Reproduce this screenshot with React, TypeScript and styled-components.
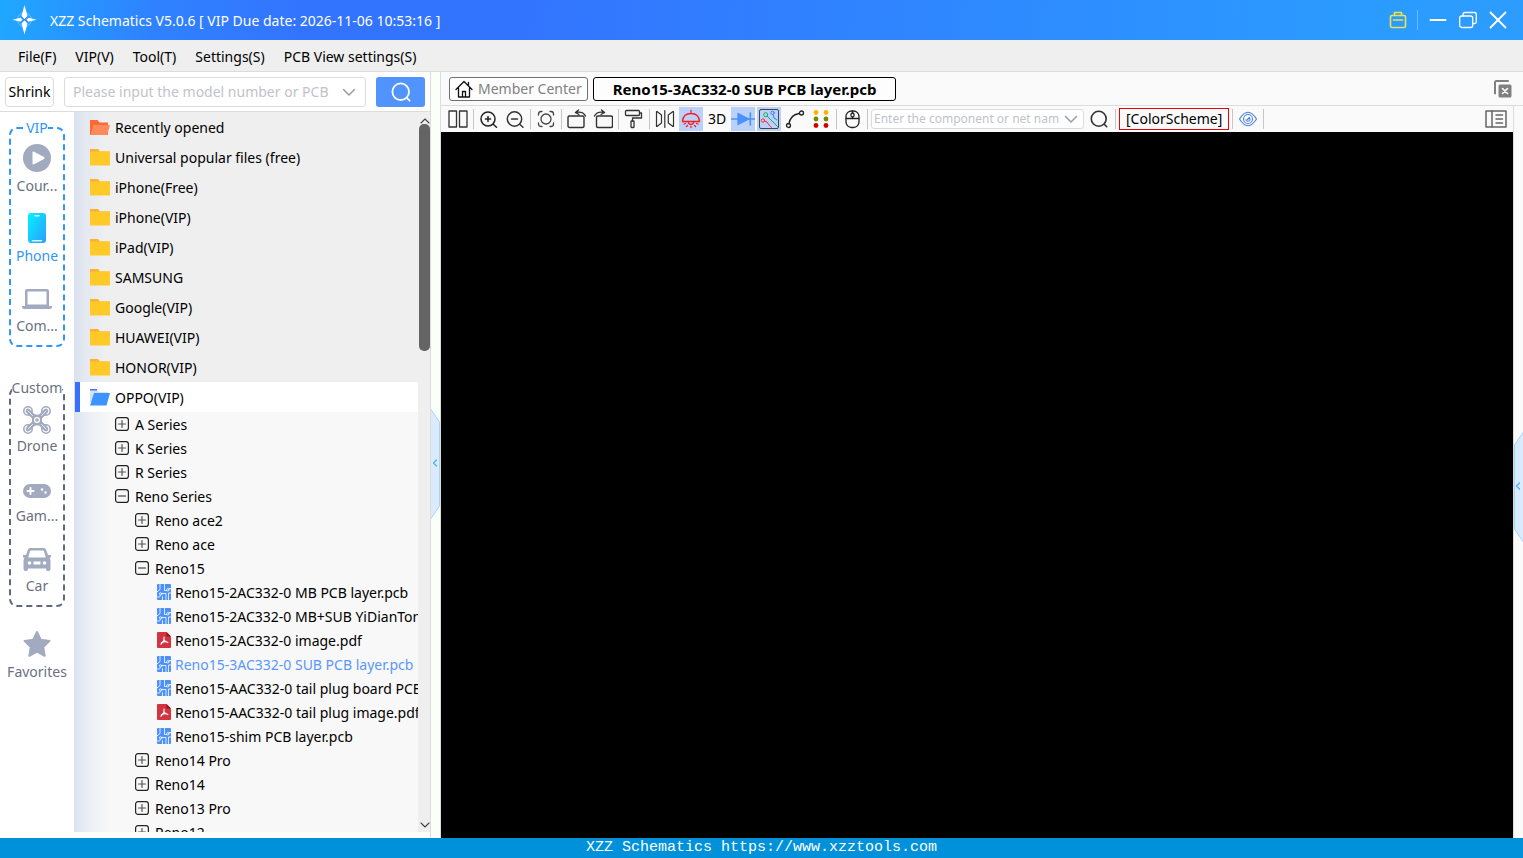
import React from 'react';
import styled, { createGlobalStyle, css } from 'styled-components';

const GlobalStyle = createGlobalStyle`
  *, *::before, *::after { box-sizing: border-box; }
  body { margin: 0; }
  body, button, input {
    font-family: "Noto Sans", "Open Sans", "Noto Sans CJK SC", sans-serif;
    font-size: 14px;
    line-height: 20px;
    color: #000;
  }
  button { border: 0; padding: 0; background: none; cursor: pointer; }
  ul { list-style: none; margin: 0; padding: 0; }
  svg { display: block; flex: none; }
`;

const Shell = styled.div`
  display: flex;
  flex-direction: column;
  height: 100vh;
  overflow: hidden;
  background: #fafafa;
`;

/* ---------- title bar and menu ---------- */

const TitleBar = styled.header`
  display: flex;
  align-items: center;
  flex: none;
  height: 40px;
  padding: 0 10px 0 12px;
  background: linear-gradient(95deg, #1fa8ff 0%, #2f82ff 10%, #3374ff 20%, #3374ff 34%, #2f86ff 60%, #2b9cff 90%, #2c9dff 100%);
`;

const AppTitle = styled.h1`
  margin: 0 auto 0 13px;
  padding-top: 2px;
  font-size: 14px;
  font-weight: 400;
  line-height: 20px;
  color: #fff;
  white-space: nowrap;
`;

const WindowButton = styled.button`
  display: grid;
  place-items: center;
  width: 30px;
  height: 30px;
`;

const TitleDivider = styled.span`
  width: 1px;
  height: 20px;
  margin: 0 5px 0 4px;
  background: #6fbaff;
`;

const MenuBar = styled.nav`
  display: flex;
  align-items: center;
  flex: none;
  gap: 19px;
  height: 32px;
  padding: 2px 18px 0;
  background: #efefef;
  border-bottom: 1px solid #dcdcdc;
`;

const MenuItem = styled.button`
  font-size: 14px;
  white-space: nowrap;
`;

const Body = styled.div`
  display: flex;
  flex: 1;
  min-height: 0;
`;

/* ---------- left panel ---------- */

const SidePanel = styled.aside`
  display: flex;
  flex-direction: column;
  flex: none;
  width: 431px;
  padding-bottom: 6px;
  background: #fff;
  border-right: 1px solid #dcdcdc;
`;

const SearchRow = styled.form`
  display: flex;
  align-items: center;
  flex: none;
  gap: 10px;
  height: 40px;
  padding: 0 5px;
  border-bottom: 1px solid #dcdcdc;
`;

const ShrinkButton = styled.button`
  width: 49px;
  height: 30px;
  border: 1px solid #dcdcdc;
  border-radius: 4px;
  background: #fff;
`;

const ComboBox = styled.div<{ $compact?: boolean }>`
  display: flex;
  align-items: center;
  flex: ${(p) => (p.$compact ? '0 1 213px' : '1')};
  min-width: 0;
  height: ${(p) => (p.$compact ? 20 : 30)}px;
  padding: 0 ${(p) => (p.$compact ? '5px 0 2px' : '9px 0 8px')};
  border: 1px solid #dcdcdc;
  border-radius: 3px;
  background: #fff;

  input {
    flex: 1;
    min-width: 0;
    padding: 0;
    border: 0;
    outline: 0;
    background: none;
    font-size: ${(p) => (p.$compact ? 12 : 14)}px;
    line-height: 18px;
  }
  input::placeholder { color: #bfc3ca; opacity: 1; }
`;

const ComboArrow = styled.button`
  display: grid;
  place-items: center;
  width: 14px;
  height: 18px;
  margin-left: 5px;
`;

const SearchButton = styled.button`
  display: grid;
  place-items: center;
  width: 49px;
  height: 30px;
  border-radius: 3px;
  background: #5294ff;
`;

const PanelBody = styled.div`
  display: flex;
  flex: 1;
  min-height: 0;
`;

const CategoryNav = styled.nav`
  flex: none;
  width: 74px;
  padding: 6px 0 0;
  background: #fff;
`;

const CategoryButton = styled.button<{ $active?: boolean }>`
  display: flex;
  flex-direction: column;
  align-items: center;
  justify-content: space-between;
  width: 100%;
  height: 52px;
  color: ${(p) => (p.$active ? '#2f97f5' : '#6a7080')};
  white-space: nowrap;
`;

const CategoryGroup = styled.fieldset<{ $accent?: boolean }>`
  display: flex;
  flex-direction: column;
  gap: ${(p) => (p.$accent ? 18 : 20)}px;
  min-width: 0;
  margin: 0 9px ${(p) => (p.$accent ? 31 : 23)}px;
  padding: ${(p) => (p.$accent ? 6 : 8)}px 0 9px;
  border: 2px dashed ${(p) => (p.$accent ? '#2f97f5' : '#5f6880')};
  border-radius: 8px;
  color: ${(p) => (p.$accent ? '#2f97f5' : '#6a7080')};

  legend {
    margin: 0 auto;
    padding: 0;
    line-height: 20px;
  }
  ${CategoryButton} {
    height: ${(p) => (p.$accent ? 52 : 50)}px;
  }
`;

const IconSlot = styled.span`
  display: flex;
  align-items: center;
  height: 28px;
`;

const TreePane = styled.div`
  flex: 1;
  min-width: 0;
  overflow: hidden;
  padding-left: 1px;
  background: linear-gradient(90deg, #d8e1ef 0, #e4e8f0 10px, #efefef 32px);
`;

const FolderRow = styled.button<{ $selected?: boolean }>`
  display: flex;
  align-items: center;
  gap: 5px;
  width: 100%;
  height: 30px;
  padding-left: 10px;
  border-left: 5px solid transparent;
  white-space: nowrap;
  ${(p) => p.$selected && css`
    background: #fff;
    border-left-color: #3a70ff;
  `}
`;

const RowLabel = styled.span`
  padding-top: 2px;
`;

const SubTree = styled.ul`
  background: linear-gradient(90deg, #dbe4f3 0, #eaeef5 12px, #f8f8f8 36px);
`;

const TreeRow = styled.button<{ $level: number; $active?: boolean }>`
  display: flex;
  align-items: center;
  gap: ${(p) => (p.$level === 3 ? 4 : 6)}px;
  width: 100%;
  height: 24px;
  padding-left: ${(p) => (p.$level === 3 ? 82 : 20 + p.$level * 20)}px;
  overflow: hidden;
  color: ${(p) => (p.$active ? '#5b97fb' : '#000')};
  white-space: nowrap;
`;

const ScrollTrack = styled.div`
  display: flex;
  flex-direction: column;
  align-items: center;
  flex: none;
  width: 12px;
  padding: 6px 0 4px 1px;
  background: #efefef;
`;

const ScrollThumb = styled.div`
  width: 11px;
  height: 32%;
  margin: 0 0 auto;
  border-radius: 5px;
  background: #646464;
`;

const Gutter = styled.div<{ $offset: number }>`
  display: flex;
  flex-direction: column;
  justify-content: center;
  flex: none;
  width: 9px;
  padding-top: ${(p) => p.$offset}px;
`;

const LeftGutter = styled(Gutter)`
  background: #fafff8;
`;

/* ---------- main area ---------- */

const Main = styled.main`
  display: flex;
  flex-direction: column;
  flex: 1;
  min-width: 0;
  border-left: 1px solid #dcdcdc;
`;

const TabBar = styled.div`
  display: flex;
  align-items: center;
  flex: none;
  gap: 5px;
  height: 34px;
  padding: 0 11px 0 8px;
  border-bottom: 1px solid #dcdcdc;
`;

const Tab = styled.button<{ $active?: boolean }>`
  display: flex;
  align-items: center;
  justify-content: center;
  gap: 5px;
  height: 24px;
  padding: 0 ${(p) => (p.$active ? 19 : 5)}px;
  border: 1px solid ${(p) => (p.$active ? '#000' : '#707070')};
  border-radius: 3px;
  background: #fdfdfd;
  color: ${(p) => (p.$active ? '#000' : '#808080')};
  font-size: ${(p) => (p.$active ? 15 : 14)}px;
  font-weight: ${(p) => (p.$active ? 700 : 400)};
  white-space: nowrap;
`;

const CloseTabs = styled.button`
  margin-left: auto;
`;

const Workspace = styled.div`
  display: flex;
  flex: 1;
  min-height: 0;
`;

const Viewer = styled.section`
  display: flex;
  flex-direction: column;
  flex: 1;
  min-width: 0;
  border-right: 1px solid #dcdcdc;
`;

const Toolbar = styled.div`
  display: flex;
  align-items: center;
  flex: none;
  gap: 2px;
  height: 26px;
  padding: 0 5px;
`;

const ToolButton = styled.button<{ $on?: boolean }>`
  display: grid;
  place-items: center;
  flex: none;
  width: 24px;
  height: 24px;
  background: ${(p) => (p.$on ? '#b9d1fb' : 'transparent')};
`;

const FindButton = styled(ToolButton)`
  width: 26px;
`;

const Separator = styled.span`
  flex: none;
  width: 1px;
  height: 20px;
  margin: 0 1px;
  background: #c6c6c6;
`;

const SchemeButton = styled.button`
  flex: none;
  height: 22px;
  padding: 0 6px;
  border: 1px solid #f00000;
`;

const PanelToggle = styled(ToolButton)`
  margin-left: auto;
`;

const Canvas = styled.div`
  flex: 1;
  background: #000;
`;

const StatusBar = styled.footer`
  flex: none;
  height: 20px;
  background: #0091da;
  color: #fff;
  font-family: "Liberation Mono", "DejaVu Sans Mono", monospace;
  font-size: 15px;
  line-height: 20px;
  text-align: center;
  white-space: nowrap;

  a { color: inherit; text-decoration: none; }
`;

/* ---------- icons ---------- */

type IconProps = { w?: number; h?: number; box?: string; color?: string; sw?: number; children: React.ReactNode };

const Icon = ({ w = 20, h = 20, box, color = '#333', sw = 1.3, children }: IconProps) => (
  <svg width={w} height={h} viewBox={box ?? `0 0 ${w} ${h}`} fill="none" stroke={color} strokeWidth={sw}
    strokeLinecap="round" strokeLinejoin="round" aria-hidden="true">
    {children}
  </svg>
);

const Logo = () => (
  <Icon w={25} h={30} color="none">
    <circle cx="12.500" cy="14.700" r="7" stroke="#7fbcff" strokeWidth="1" />
    <path d="M12.500 0 L15.500 11 L13 14 H12 L9.500 11Z M12.500 29.500 L15.500 18.500 L13 15.500 H12 L9.500 18.500Z" fill="#fff" />
    <path d="M0.500 14.700 L8.500 12.700 L10.500 14.700 L8.500 16.700Z M24.500 14.700 L16.500 12.700 L14.500 14.700 L16.500 16.700Z" fill="#fff" />
    <path d="M9.800 12.200 L15.200 17.300 M15.200 12.200 L9.800 17.300" stroke="#3a86ff" strokeWidth="1" />
  </Icon>
);

const Chevron = () => (
  <Icon w={14} h={8} color="#9a9da3" sw={1.5}><path d="M1.500 1.500 L7 7 L12.500 1.500" /></Icon>
);

const Magnifier = ({ color, size }: { color: string; size: number }) => (
  <Icon w={size} h={size} box="0 0 20 20" color={color} sw={1.8}>
    <circle cx="9.700" cy="9.700" r="8.300" />
    <path d="M15.800 15.800 L18.600 18.600" />
  </Icon>
);

const Folder = () => (
  <Icon w={20} h={18} color="none">
    <path d="M0 1 H8 L10 3.500 H20 V8 H0Z" fill="#ffb02e" />
    <rect x="0" y="3.500" width="20" height="14" rx="0.500" fill="#ffc928" />
  </Icon>
);

const RecentFolder = () => (
  <Icon w={20} h={18} color="none">
    <path d="M0 2 H7.500 L9.500 4.500 H18 V17 H0Z" fill="#fb6a35" />
    <path d="M3.500 7 H20 L17.200 17 H0.500Z" fill="#ff8a5c" />
  </Icon>
);

const OpenFolder = () => (
  <Icon w={20} h={18} color="none">
    <path d="M0 1 H7 V3 H0Z" fill="#4a74f0" />
    <path d="M0 2.500 H7.500 L9 4 H18 V7 L2 14 H0Z" fill="#d5e0fa" />
    <path d="M4 5 H20 L16.500 17.500 H0Z" fill="#3d93ff" />
  </Icon>
);

const Expander = ({ open }: { open: boolean }) => (
  <Icon w={14} h={14} color="#222" sw={1.2}>
    <rect x="0.600" y="0.600" width="12.800" height="12.800" rx="2.500" />
    <path d="M3.500 7 H10.500" stroke={open ? '#222' : '#555'} />
    {!open && <path d="M7 3.500 V10.500" stroke="#555" />}
  </Icon>
);

const PcbFile = () => (
  <Icon w={14} h={16} color="#fff" sw={0.8}>
    <rect width="14" height="16" rx="1" fill="#4c90fb" stroke="none" />
    <path d="M7.500 0 V6.500 H9.500 M3 0 V5.500 L0 8 M14 4.500 H12 M4.700 9.500 H9 V16 M0 13 H2.500 L3.500 11 M5.500 16 V12.500 M14 9 H11.500 V16" />
    <circle cx="10.800" cy="5.800" r="1.200" />
    <circle cx="3.600" cy="9.800" r="1.200" />
  </Icon>
);

const PdfFile = () => (
  <Icon w={14} h={16} color="#fff" sw={1.2}>
    <path d="M1 0 H9.500 L14 4.500 V15 Q14 16 13 16 H1 Q0 16 0 15 V1 Q0 0 1 0Z" fill="#d23440" stroke="none" />
    <path d="M9.500 0 L14 4.500 H9.500Z" fill="#8f1820" stroke="none" />
    <path d="M7 5 V8.500 L4 12 M7 8.500 L10.800 10.500 M4.500 10.500 L9 9.500" />
  </Icon>
);

const G = '#a2aabf';

const PlayIcon = () => (
  <Icon w={28} h={28} color="none">
    <circle cx="14" cy="14" r="14" fill={G} />
    <path d="M9.500 8.500 Q9.500 7 11 7.700 L21 13 Q22.300 14 21 15 L11 20.300 Q9.500 21 9.500 19.500Z" fill="#fff" />
  </Icon>
);

const PhoneIcon = () => (
  <Icon w={28} h={30} color="none">
    <defs>
      <linearGradient id="phone" x1="0" x2="1" y1="0" y2="1">
        <stop offset="0" stopColor="#05f2ff" /><stop offset="1" stopColor="#2c9dff" />
      </linearGradient>
    </defs>
    <rect x="5" y="0" width="18" height="30" rx="3" fill="url(#phone)" />
    <path d="M12 2.800 H16 M9.500 27.800 H18.500" stroke="#d8f4ff" strokeWidth="1.500" />
  </Icon>
);

const LaptopIcon = () => (
  <Icon w={30} h={28} color="none">
    <path fillRule="evenodd" d="M5 5 H25 Q27 5 27 7 V22 H3 V7 Q3 5 5 5Z M5.500 7.500 V20.500 H24.500 V7.500Z" fill={G} />
    <path d="M0 22 H30 V23 Q30 25 28 25 H2 Q0 25 0 23Z" fill={G} />
  </Icon>
);

const DroneIcon = () => (
  <Icon w={28} h={28} color={G} sw={1.6}>
    {[[5, 5], [23, 5], [5, 23], [23, 23]].map(([x, y]) => (
      <React.Fragment key={`${x}-${y}`}>
        <circle cx={x} cy={y} r="4.200" />
        <path d={`M${x} ${y} L14 14`} strokeWidth="4.600" />
      </React.Fragment>
    ))}
    <rect x="9" y="8.500" width="10" height="11" rx="3.500" fill={G} stroke="none" />
    <circle cx="14" cy="14" r="2.400" stroke="#fff" strokeWidth="1.200" />
    <path d="M5 5 L9.500 9.500 M23 5 L18.500 9.500 M5 23 L9.500 18.500 M23 23 L18.500 18.500" stroke="#fff" strokeWidth="0.800" />
  </Icon>
);

const GamepadIcon = () => (
  <Icon w={28} h={28} color="none">
    <rect x="0" y="8" width="28" height="14" rx="7" fill={G} />
    <path d="M7.500 12 V18 M4.500 15 H10.500" stroke="#fff" strokeWidth="2" />
    <circle cx="19" cy="13.500" r="1.200" fill="#fff" /><circle cx="22.500" cy="16.500" r="1.200" fill="#fff" />
  </Icon>
);

const CarIcon = () => (
  <Icon w={28} h={28} color="none">
    <path fillRule="evenodd" d="M7.500 2 H20.500 Q22.500 2 23.200 4 L25 9 H28 V11.500 H26.500 Q27.500 13 27.500 15 V23 Q27.500 25 25.500 25 H24.500 Q23 25 23 22.500 H5 Q5 25 3.500 25 H2.500 Q0.500 25 0.500 23 V15 Q0.500 13 1.500 11.500 H0 V9 H3 L4.800 4 Q5.500 2 7.500 2Z M8 4.500 Q7.200 4.500 7 5.200 L5.200 11.500 H22.800 L21 5.200 Q20.800 4.500 20 4.500Z" fill={G} />
    <circle cx="6.500" cy="17" r="1.800" fill="#fff" /><circle cx="21.500" cy="17" r="1.800" fill="#fff" />
    <rect x="10.500" y="15.500" width="7" height="3" fill="#fff" />
  </Icon>
);

const StarIcon = () => (
  <Icon w={28} h={28} color={G} sw={2}>
    <path d="M14 2 L17.700 9.700 L26.500 10.900 L20.200 17 L21.700 25.800 L14 21.700 L6.300 25.800 L7.800 17 L1.500 10.900 L10.300 9.700Z" fill={G} />
  </Icon>
);

const HomeIcon = () => (
  <Icon w={18} h={18} color="#111" sw={1.3}>
    <path d="M1 9.500 L9 1.500 L17 9.500 M3.500 8 V17 H14.500 V8 M7.500 17 V11.500 H10.500 V17 M13.500 5 V2.500" />
  </Icon>
);

/* Draws the two-wing handle that collapses a side panel. */
const CollapseHandle = ({ flip, label }: { flip?: boolean; label: string }) => (
  <button type="button" aria-label={label}>
    <Icon w={9} h={110} color="#a5d3fb" sw={1}>
      <path d={flip ? 'M9 0.500 L0.500 13 V97 L9 109.500' : 'M0 0.500 L8.500 13 V97 L0 109.500'} fill="#d9ebfd" />
      <path d="M5.500 51 L2.500 54 L5.500 57" stroke="#56aef5" strokeWidth="1.300" />
    </Icon>
  </button>
);

const ScrollArrow = ({ down }: { down?: boolean }) => (
  <Icon w={10} h={6} color="#444" sw={1.1}>
    <path d={down ? 'M1 1 L5 5 L9 1' : 'M1 5 L5 1 L9 5'} />
  </Icon>
);

const toolIcons = {
  columns: <Icon><rect x="1" y="2" width="7.500" height="16" /><rect x="11.500" y="2" width="7.500" height="16" /></Icon>,
  zoomIn: <Icon color="#222" sw={1.5}><circle cx="9" cy="10" r="7" /><path d="M14.200 15.200 L17.500 18.200 M9 7.500 V12.500 M6.500 10 H11.500" /></Icon>,
  zoomOut: <Icon sw={1.5}><circle cx="9.500" cy="10" r="7.200" /><path d="M14.700 15.200 L18 18.200 M6.500 10 H12.500" /></Icon>,
  fit: <Icon color="#444"><circle cx="10" cy="10" r="5" /><path d="M2.500 6 V5 Q2.500 2.500 5 2.500 H6 M14 2.500 H15 Q17.500 2.500 17.500 5 V6 M17.500 14 V15 Q17.500 17.500 15 17.500 H14 M6 17.500 H5 Q2.500 17.500 2.500 15 V14" /></Icon>,
  rotateLeft: <Icon sw={1.4}><rect x="1" y="7" width="16" height="11.500" rx="1.500" /><path d="M8.500 3.500 Q16 2 18.500 7 M11.500 1 L8.500 3.500 L12 5.500" /></Icon>,
  rotateRight: <Icon sw={1.4}><rect x="3.500" y="7" width="16" height="11.500" rx="1.500" /><path d="M11.500 3.500 Q4 2 1.500 7 M8.500 1 L11.500 3.500 L8 5.500" /></Icon>,
  paint: <Icon sw={1.3}><rect x="1.500" y="1.500" width="14" height="5" rx="1" /><path d="M15.500 4 H17.500 V9 H8.500 V12" /><rect x="7" y="12" width="3" height="6.500" rx="0.500" /></Icon>,
  mirror: <Icon sw={1.2}><path d="M1.500 2.500 H2 L6.500 6 V14 L2 17.500 H1.500Z M9.800 1.500 V18.500 M18.500 2.500 H18 L13.300 6 V14 L18 17.500 H18.500Z" /></Icon>,
  lamp: <Icon color="#ff1a1a" sw={1.3}><path d="M1.500 12.500 Q2 4.500 10 4.500 Q18 4.500 18.500 12.500Z M10 1.500 V4.500 M7 12.500 Q7.500 15.500 10 15.500 Q12.500 15.500 13 12.500 M3 15 L4.500 14.500 M17 15 L15.500 14.500 M5.500 17.500 L6.500 16.500 M14.500 17.500 L13.500 16.500 M10 18.500 V17.500" /></Icon>,
  diode: <Icon w={24} color="#4c90fb"><path d="M0 10 H24" /><path d="M7 4.500 L18 10 L7 15.500Z" fill="#4c90fb" /><path d="M19.300 4 V16" strokeWidth="1.600" /></Icon>,
  board: (
    <Icon color="#444" sw={1}>
      <rect x="0.500" y="0.500" width="19" height="19" rx="1.500" />
      <path d="M8.300 7.300 L18.500 17.500" stroke="#1fae45" /><circle cx="6.700" cy="5.700" r="2" stroke="#1fae45" />
      <path d="M5.500 12.500 L8 13 L10 16 L12.500 18.500" stroke="#ff3030" /><circle cx="4" cy="11.500" r="1.700" stroke="#ff3030" />
      <path d="M14 5.500 L15 9 L18 11" stroke="#3b7bff" /><circle cx="13.500" cy="3.800" r="1.700" stroke="#3b7bff" />
    </Icon>
  ),
  arc: <Icon color="#222"><path d="M4 15 Q5 6 14 4.500" /><circle cx="3.500" cy="16.500" r="2" /><circle cx="16.500" cy="4" r="2" /></Icon>,
  dots: (
    <Icon color="none">
      {['#ffb000', '#728c00', '#d00000'].map((fill, i) => (
        <React.Fragment key={fill}>
          <circle cx="5" cy={3.5 + i * 6.5} r="2.400" fill={fill} />
          <circle cx="15" cy={3.5 + i * 6.5} r="2.400" fill={fill} />
        </React.Fragment>
      ))}
    </Icon>
  ),
  mouse: <Icon color="#222"><rect x="4" y="2" width="13" height="16.500" rx="5.500" /><path d="M4 9.500 H17 M10.500 2 V4 M10.500 8 V9.500" /><rect x="9" y="4" width="3" height="4" rx="1.500" /></Icon>,
  eye: <Icon color="#4c80e0" sw={1.1}><path d="M1.500 10 Q10 -3.500 18.500 10 Q10 23.500 1.500 10Z" /><circle cx="10" cy="10" r="4.500" /><path d="M8 10.500 A2 2 0 1 0 11 8.500 M9.500 10.500 L11.500 8.500" /></Icon>,
};

type ToolName = keyof typeof toolIcons;

const Tool = ({ name, label, on }: { name: ToolName; label: string; on?: boolean }) => (
  <ToolButton type="button" aria-label={label} aria-pressed={on} $on={on}>{toolIcons[name]}</ToolButton>
);

/* ---------- data ---------- */

const menus = ['File(F)', 'VIP(V)', 'Tool(T)', 'Settings(S)', 'PCB View settings(S)'];

const folders = [
  'Universal popular files (free)', 'iPhone(Free)', 'iPhone(VIP)', 'iPad(VIP)', 'SAMSUNG',
  'Google(VIP)', 'HUAWEI(VIP)', 'HONOR(VIP)',
];

type Node = { label: string; level: 1 | 2 | 3; kind: 'closed' | 'open' | 'pcb' | 'pdf'; active?: boolean };

const nodes: Node[] = [
  { label: 'A Series', level: 1, kind: 'closed' },
  { label: 'K Series', level: 1, kind: 'closed' },
  { label: 'R Series', level: 1, kind: 'closed' },
  { label: 'Reno Series', level: 1, kind: 'open' },
  { label: 'Reno ace2', level: 2, kind: 'closed' },
  { label: 'Reno ace', level: 2, kind: 'closed' },
  { label: 'Reno15', level: 2, kind: 'open' },
  { label: 'Reno15-2AC332-0 MB PCB layer.pcb', level: 3, kind: 'pcb' },
  { label: 'Reno15-2AC332-0 MB+SUB YiDianTong.pcb', level: 3, kind: 'pcb' },
  { label: 'Reno15-2AC332-0 image.pdf', level: 3, kind: 'pdf' },
  { label: 'Reno15-3AC332-0 SUB PCB layer.pcb', level: 3, kind: 'pcb', active: true },
  { label: 'Reno15-AAC332-0 tail plug board PCB layer.pcb', level: 3, kind: 'pcb' },
  { label: 'Reno15-AAC332-0 tail plug image.pdf', level: 3, kind: 'pdf' },
  { label: 'Reno15-shim PCB layer.pcb', level: 3, kind: 'pcb' },
  { label: 'Reno14 Pro', level: 2, kind: 'closed' },
  { label: 'Reno14', level: 2, kind: 'closed' },
  { label: 'Reno13 Pro', level: 2, kind: 'closed' },
  { label: 'Reno12', level: 2, kind: 'closed' },
];

const nodeIcon = (kind: Node['kind']) => {
  if (kind === 'pcb') return <PcbFile />;
  if (kind === 'pdf') return <PdfFile />;
  return <Expander open={kind === 'open'} />;
};

const Category = ({ icon, label, active }: { icon: React.ReactNode; label: string; active?: boolean }) => (
  <CategoryButton type="button" $active={active}>
    <IconSlot>{icon}</IconSlot>
    <span>{label}</span>
  </CategoryButton>
);

export default function App() {
  return (
    <Shell>
      <GlobalStyle />
      <TitleBar>
        <Logo />
        <AppTitle>XZZ Schematics V5.0.6 [ VIP Due date: 2026-11-06 10:53:16 ]</AppTitle>
        <WindowButton type="button" aria-label="Toolbox">
          <Icon w={18} h={18} color="#f0e050" sw={1.6}>
            <rect x="1.500" y="4.500" width="15" height="12" rx="1.500" />
            <path d="M5.500 4.500 V1.500 H12.500 V4.500 M4.500 9 H13.500" />
          </Icon>
        </WindowButton>
        <TitleDivider />
        <WindowButton type="button" aria-label="Minimize">
          <Icon w={18} h={18} color="#fff" sw={2}><path d="M1.500 9 H16.500" /></Icon>
        </WindowButton>
        <WindowButton type="button" aria-label="Restore">
          <Icon w={18} h={18} color="#fff" sw={1.3}>
            <rect x="0.700" y="5" width="13" height="11.500" rx="2" />
            <path d="M4 5 V3.500 Q4 1.500 6 1.500 H15.500 Q17.300 1.500 17.300 3.500 V11 Q17.300 12.500 15.500 12.500 H13.700" />
          </Icon>
        </WindowButton>
        <WindowButton type="button" aria-label="Close">
          <Icon w={18} h={18} color="#fff" sw={1.8}><path d="M1.500 1.500 L16.500 16.500 M16.500 1.500 L1.500 16.500" /></Icon>
        </WindowButton>
      </TitleBar>

      <MenuBar aria-label="Main menu">
        {menus.map((m) => <MenuItem type="button" key={m}>{m}</MenuItem>)}
      </MenuBar>

      <Body>
        <SidePanel>
          <SearchRow role="search" onSubmit={(e) => e.preventDefault()}>
            <ShrinkButton type="button">Shrink</ShrinkButton>
            <ComboBox>
              <input type="text" aria-label="Model search" placeholder="Please input the model number or PCB" />
              <ComboArrow type="button" aria-label="Show model history"><Chevron /></ComboArrow>
            </ComboBox>
            <SearchButton type="submit" aria-label="Search"><Magnifier color="#fff" size={20} /></SearchButton>
          </SearchRow>

          <PanelBody>
            <CategoryNav aria-label="Categories">
              <CategoryGroup $accent>
                <legend>VIP</legend>
                <Category icon={<PlayIcon />} label="Cour..." />
                <Category icon={<PhoneIcon />} label="Phone" active />
                <Category icon={<LaptopIcon />} label="Com..." />
              </CategoryGroup>
              <CategoryGroup>
                <legend>Custom</legend>
                <Category icon={<DroneIcon />} label="Drone" />
                <Category icon={<GamepadIcon />} label="Gam..." />
                <Category icon={<CarIcon />} label="Car" />
              </CategoryGroup>
              <Category icon={<StarIcon />} label="Favorites" />
            </CategoryNav>

            <TreePane>
              <ul>
                <li><FolderRow type="button"><RecentFolder /><RowLabel>Recently opened</RowLabel></FolderRow></li>
                {folders.map((f) => (
                  <li key={f}><FolderRow type="button"><Folder /><RowLabel>{f}</RowLabel></FolderRow></li>
                ))}
                <li>
                  <FolderRow type="button" $selected><OpenFolder /><RowLabel>OPPO(VIP)</RowLabel></FolderRow>
                  <SubTree>
                    {nodes.map((n) => (
                      <li key={n.label}>
                        <TreeRow type="button" $level={n.level} $active={n.active}>
                          {nodeIcon(n.kind)}<RowLabel>{n.label}</RowLabel>
                        </TreeRow>
                      </li>
                    ))}
                  </SubTree>
                </li>
              </ul>
            </TreePane>

            <ScrollTrack aria-hidden="true">
              <ScrollArrow />
              <ScrollThumb />
              <ScrollArrow down />
            </ScrollTrack>
          </PanelBody>
        </SidePanel>

        <LeftGutter $offset={18}>
          <CollapseHandle label="Collapse left panel" />
        </LeftGutter>

        <Main>
          <TabBar>
            <Tab type="button"><HomeIcon />Member Center</Tab>
            <Tab type="button" $active>Reno15-3AC332-0 SUB PCB layer.pcb</Tab>
            <CloseTabs type="button" aria-label="Close all tabs">
              <Icon w={18} h={18} color="#808080" sw={2}>
                <path d="M1 13.500 V2.500 Q1 1 2.500 1 H14" />
                <rect x="4.500" y="4.500" width="13" height="13" rx="1.500" fill="#808080" stroke="none" />
                <path d="M8.500 8.500 L13.500 13.500 M13.500 8.500 L8.500 13.500" stroke="#fff" strokeWidth="1.600" />
              </Icon>
            </CloseTabs>
          </TabBar>

          <Workspace>
            <Viewer>
              <Toolbar role="toolbar" aria-label="Board tools">
                <Tool name="columns" label="Split view" />
                <Separator />
                <Tool name="zoomIn" label="Zoom in" />
                <Tool name="zoomOut" label="Zoom out" />
                <Separator />
                <Tool name="fit" label="Fit to window" />
                <Separator />
                <Tool name="rotateLeft" label="Rotate left" />
                <Tool name="rotateRight" label="Rotate right" />
                <Separator />
                <Tool name="paint" label="Paint" />
                <Separator />
                <Tool name="mirror" label="Mirror" />
                <Tool name="lamp" label="Lamp" on />
                <ToolButton type="button">3D</ToolButton>
                <Tool name="diode" label="Diode values" on />
                <Tool name="board" label="Board traces" on />
                <Tool name="arc" label="Connections" />
                <Tool name="dots" label="Pin colors" />
                <Separator />
                <Tool name="mouse" label="Mouse mode" />
                <Separator />
                <ComboBox $compact>
                  <input type="text" aria-label="Component search" placeholder="Enter the component or net name" />
                  <ComboArrow type="button" aria-label="Show component history"><Chevron /></ComboArrow>
                </ComboBox>
                <FindButton type="button" aria-label="Find"><Magnifier color="#333" size={18} /></FindButton>
                <Separator />
                <SchemeButton type="button">[ColorScheme]</SchemeButton>
                <Separator />
                <Tool name="eye" label="Toggle visibility" />
                <Separator />
                <PanelToggle type="button" aria-label="Toggle details panel">
                  <Icon w={22} h={18} color="#666" sw={1.5}>
                    <rect x="1" y="1" width="20" height="16" />
                    <path d="M7 1 V17 M11 5 H17.500 M11 9 H17.500 M11 13 H17.500" />
                  </Icon>
                </PanelToggle>
              </Toolbar>
              <Canvas />
            </Viewer>
            <Gutter $offset={30}>
              <CollapseHandle flip label="Open right panel" />
            </Gutter>
          </Workspace>
        </Main>
      </Body>

      <StatusBar>XZZ Schematics <a href="https://www.xzztools.com">https://www.xzztools.com</a></StatusBar>
    </Shell>
  );
}
